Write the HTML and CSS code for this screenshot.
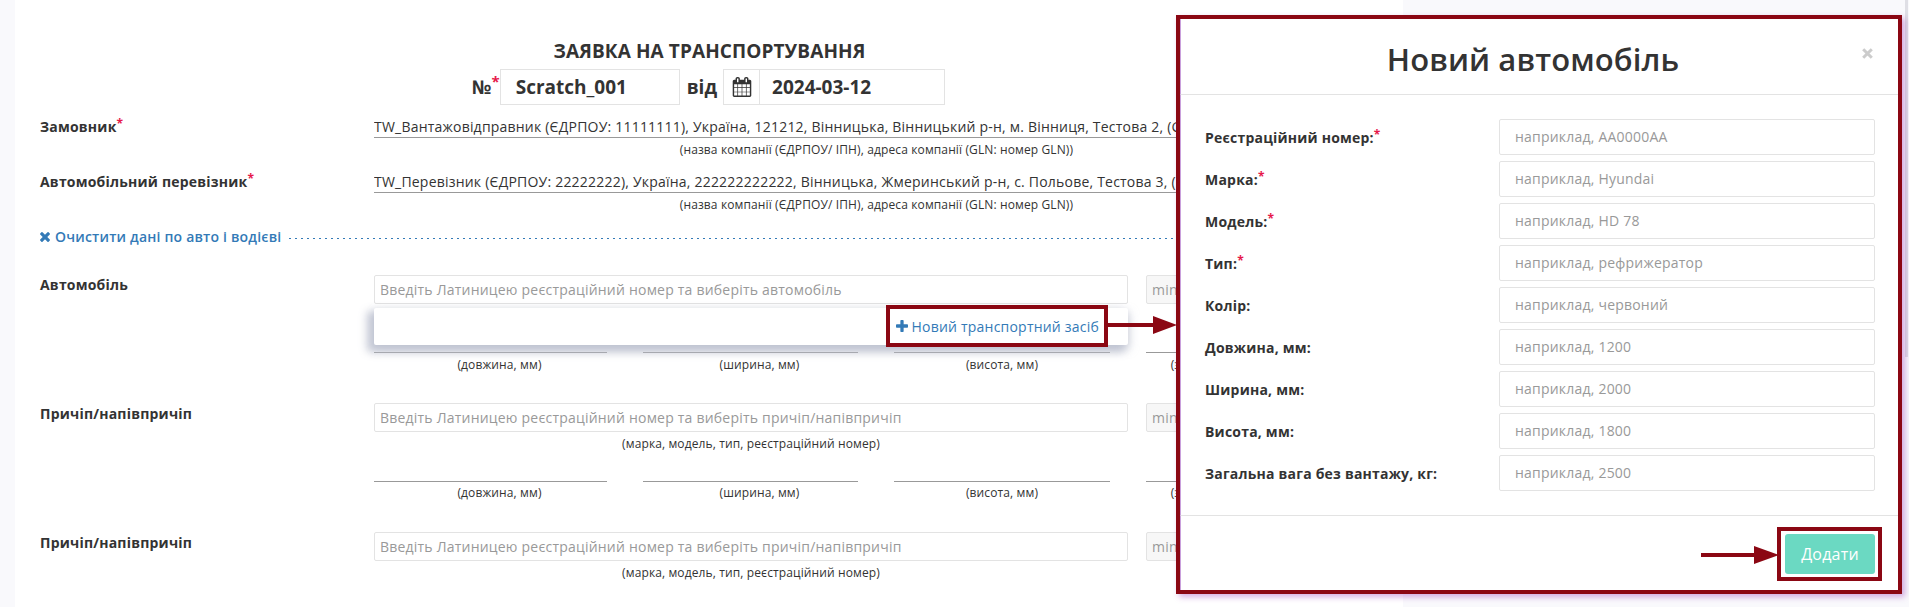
FILE: index.html
```
<!DOCTYPE html>
<html lang="uk">
<head>
<meta charset="utf-8">
<title>Заявка на транспортування</title>
<link rel="stylesheet" href="styles.css">
</head>
<body>
<main class="sheet">
  <h1 class="sheet-title">ЗАЯВКА НА ТРАНСПОРТУВАННЯ</h1>
  <div class="doc-line">
    <span class="doc-label">№<i class="req">*</i></span>
    <span class="doc-input doc-number">Scratch_001</span>
    <span class="doc-label doc-from">від</span>
    <span class="doc-date">
      <span class="doc-addon"><svg viewBox="0 0 1792 1792"><path d="M192 1664h288v-288h-288v288zm352 0h320v-288h-320v288zm-352-352h288v-320h-288v320zm352 0h320v-320h-320v320zm-352-384h288v-288h-288v288zm736 736h320v-288h-320v288zm-384-736h320v-288h-320v288zm768 736h288v-288h-288v288zm-384-352h320v-320h-320v320zm-352-864v-288q0-13-9.5-22.5t-22.5-9.5h-64q-13 0-22.5 9.5t-9.5 22.5v288q0 13 9.5 22.5t22.5 9.5h64q13 0 22.5-9.5t9.5-22.5zm736 864h288v-320h-288v320zm-384-384h320v-288h-320v288zm384 0h288v-288h-288v288zm32-480v-288q0-13-9.5-22.5t-22.5-9.5h-64q-13 0-22.5 9.5t-9.5 22.5v288q0 13 9.5 22.5t22.5 9.5h64q13 0 22.5-9.5t9.5-22.5zm384-64v1280q0 52-38 90t-90 38h-1408q-52 0-90-38t-38-90v-1280q0-52 38-90t90-38h128v-96q0-66 47-113t113-47h64q66 0 113 47t47 113v96h384v-96q0-66 47-113t113-47h64q66 0 113 47t47 113v96h128q52 0 90 38t38 90z"/></svg></span>
      <span class="doc-date-value">2024-03-12</span>
    </span>
  </div>

  <section class="row party">
    <div class="label">Замовник<i class="req">*</i></div>
    <div class="field">
      <div class="value">TW_Вантажовідправник (ЄДРПОУ: 11111111), Україна, 121212, Вінницька, Вінницький р-н, м. Вінниця, Тестова 2, (G</div>
      <div class="hint">(назва компанії (ЄДРПОУ/ ІПН), адреса компанії (GLN: номер GLN))</div>
    </div>
  </section>
  <section class="row party">
    <div class="label">Автомобільний перевізник<i class="req">*</i></div>
    <div class="field">
      <div class="value">TW_Перевізник (ЄДРПОУ: 22222222), Україна, 222222222222, Вінницька, Жмеринський р-н, с. Польове, Тестова 3, (G</div>
      <div class="hint">(назва компанії (ЄДРПОУ/ ІПН), адреса компанії (GLN: номер GLN))</div>
    </div>
  </section>

  <div class="clear-row">
    <a class="link clear"><svg class="ico-x" viewBox="302 302 1188 1188"><path d="M1490 1322q0 40-28 68l-136 136q-28 28-68 28t-68-28l-294-294-294 294q-28 28-68 28t-68-28l-136-136q-28-28-28-68t28-68l294-294-294-294q-28-28-28-68t28-68l136-136q28-28 68-28t68 28l294 294 294-294q28-28 68-28t68 28l136 136q28 28 28 68t-28 68l-294 294 294 294q28 28 28 68z" transform="translate(0 -64)"/></svg>Очистити дані по авто і водієві</a>
    <span class="dots"></span>
  </div>

  <section class="row vehicle">
    <div class="label">Автомобіль</div>
    <div class="field">
      <div class="inputs">
        <div class="input">Введіть Латиницею реєстраційний номер та виберіть автомобіль
          <div class="dropdown"><a class="link"><svg class="ico-plus" viewBox="192 192 1408 1408"><path d="M1600 736v192q0 40-28 68t-68 28h-416v416q0 40-28 68t-68 28h-192q-40 0-68-28t-28-68v-416h-416q-40 0-68-28t-28-68v-192q0-40 28-68t68-28h416v-416q0-40 28-68t68-28h192q40 0 68 28t28 68v416h416q40 0 68 28t28 68z" transform="translate(0 64)"/></svg>Новий транспортний засіб</a></div>
        </div>
        <div class="input disabled">min</div>
      </div>
      <div class="dims first">
        <div class="hint">(довжина, мм)</div><div class="hint">(ширина, мм)</div><div class="hint">(висота, мм)</div><div class="hint">(загальна вага без вантажу, кг)</div>
      </div>
    </div>
  </section>
  <section class="row vehicle trailer">
    <div class="label">Причіп/напівпричіп</div>
    <div class="field">
      <div class="inputs">
        <div class="input">Введіть Латиницею реєстраційний номер та виберіть причіп/напівпричіп</div>
        <div class="input disabled">min</div>
      </div>
      <div class="hint input-hint">(марка, модель, тип, реєстраційний номер)</div>
      <div class="dims">
        <div class="hint">(довжина, мм)</div><div class="hint">(ширина, мм)</div><div class="hint">(висота, мм)</div><div class="hint">(загальна вага без вантажу, кг)</div>
      </div>
    </div>
  </section>
  <section class="row vehicle trailer">
    <div class="label">Причіп/напівпричіп</div>
    <div class="field">
      <div class="inputs">
        <div class="input">Введіть Латиницею реєстраційний номер та виберіть причіп/напівпричіп</div>
        <div class="input disabled">min</div>
      </div>
      <div class="hint input-hint">(марка, модель, тип, реєстраційний номер)</div>
    </div>
  </section>
</main>

<div class="scrollbar"></div>

<div class="modal">
  <header class="modal-head">
    <h2>Новий автомобіль</h2>
    <svg class="close" viewBox="0 0 11 11"><path d="M1.2 1.2l8.6 8.6M9.8 1.2l-8.6 8.6"/></svg>
  </header>
  <div class="modal-body">
    <div class="m-row"><div class="m-label">Реєстраційний номер:<i class="req">*</i></div><div class="m-input">наприклад, AA0000AA</div></div>
    <div class="m-row"><div class="m-label">Марка:<i class="req">*</i></div><div class="m-input">наприклад, Hyundai</div></div>
    <div class="m-row"><div class="m-label">Модель:<i class="req">*</i></div><div class="m-input">наприклад, HD 78</div></div>
    <div class="m-row"><div class="m-label">Тип:<i class="req">*</i></div><div class="m-input">наприклад, рефрижератор</div></div>
    <div class="m-row"><div class="m-label">Колір:</div><div class="m-input">наприклад, червоний</div></div>
    <div class="m-row"><div class="m-label">Довжина, мм:</div><div class="m-input">наприклад, 1200</div></div>
    <div class="m-row"><div class="m-label">Ширина, мм:</div><div class="m-input">наприклад, 2000</div></div>
    <div class="m-row"><div class="m-label">Висота, мм:</div><div class="m-input">наприклад, 1800</div></div>
    <div class="m-row"><div class="m-label">Загальна вага без вантажу, кг:</div><div class="m-input">наприклад, 2500</div></div>
  </div>
  <footer class="modal-foot"><span class="btn">Додати</span></footer>
</div>

<div class="mark mark-link"></div>
<div class="mark mark-btn"></div>
<svg class="arrow arrow-link" viewBox="0 0 70 18"><path d="M0 7h46V0l24 9-24 9v-7H0z"/></svg>
<svg class="arrow arrow-btn" viewBox="0 0 78 18"><path d="M0 7h53V0l25 9-25 9v-7H0z"/></svg>
</body>
</html>
```

FILE: styles.css
```
* { box-sizing: border-box; }
html, body { margin: 0; height: 607px; overflow: hidden; }
body {
  position: relative;
  background: #f9f9fc;
  color: #333;
  font: 14px/20px "Open Sans", "Noto Sans", sans-serif;
  letter-spacing: .21px;
}
.sheet {
  width: 1388px;
  height: 607px;
  margin-left: 15px;
  padding: 36px 24px 0 25px;
  background: #fff;
  overflow: hidden;
}
.sheet-title {
  margin: 0;
  height: 33px;
  font-size: 19px;
  line-height: 30px;
  font-weight: 700;
  letter-spacing: .1px;
  text-align: center;
}
.req {
  position: relative;
  top: -4px;
  color: #e6194b;
  font-size: 12px;
  font-style: normal;
  font-weight: 700;
  letter-spacing: 0;
  line-height: 0;
}
.doc-line {
  display: flex;
  justify-content: center;
  height: 36px;
  margin-bottom: 12px;
  padding-right: 2px;
  font-size: 19px;
  line-height: 36px;
  font-weight: 700;
  letter-spacing: 0;
}
.doc-label .req { font-size: 15px; top: -7px; }
.doc-input, .doc-date { border: 1px solid #e3e3e3; line-height: 34px; }
.doc-number { width: 180px; padding-left: 15px; }
.doc-from { padding: 0 6px 0 7px; }
.doc-date { display: flex; width: 222px; }
.doc-addon {
  display: flex;
  width: 36px;
  padding: 7px 0 0 8px;
  border-right: 1px solid #e3e3e3;
}
.doc-addon svg { width: 20px; height: 20px; fill: #333; }
.doc-date-value { padding-left: 12px; }

.row { display: grid; grid-template-columns: 334px 1005px; }
.party { height: 55px; }
.label { font-weight: 700; }
.value {
  height: 21px;
  border-bottom: 1px solid #999;
  white-space: nowrap;
  overflow: hidden;
}
.hint {
  font-size: 12px;
  line-height: 18px;
  letter-spacing: .12px;
  text-align: center;
  white-space: nowrap;
}
.party .hint { margin-top: 3px; }

.clear-row { display: flex; height: 48px; }
.link { color: #337ab7; white-space: nowrap; }
.link svg { fill: #337ab7; }
.clear { font-weight: 600; letter-spacing: .2px; }
.ico-x { width: 10px; height: 10px; margin-right: 5px; }
.ico-plus { width: 12px; height: 12px; margin-right: 4px; }
.dots {
  flex: 1;
  height: 1px;
  margin: 11px 0 0 8px;
  background: repeating-linear-gradient(90deg, #337ab7 0 2px, transparent 2px 6px);
}

.vehicle { height: 128px; }
.trailer { height: 129px; }
.trailer .label { padding-top: 1px; }
.inputs { display: grid; grid-template-columns: 754px 233px; column-gap: 18px; }
.input {
  position: relative;
  height: 29px;
  padding-left: 5px;
  border: 1px solid #e3e3e3;
  border-radius: 2px;
  background: #fff;
  color: #999;
  line-height: 27px;
}
.input.disabled { background: #f7f7f7; }
.input-hint { width: 754px; margin-top: 3px; }
.dims { display: grid; grid-template-columns: 233px 215px 216px 233px; column-gap: 36px; margin-top: 28px; }
.dims.first { margin-top: 48px; }
.dims .hint { border-top: 1px solid #999; padding-top: 3px; }
.trailer .dims .hint { padding-top: 2px; }
.dims .hint:first-child { padding-left: 18px; }
.dims .hint:nth-child(2) { padding-left: 18px; }
.dropdown {
  position: absolute;
  z-index: 1;
  left: -1px;
  top: 32px;
  width: 754px;
  height: 37px;
  padding: 9px 29px 0 0;
  border-radius: 2px;
  background: #fff;
  box-shadow: -5px 5px 8px 2px rgba(186, 190, 206, .85), 2px 4px 8px rgba(186, 190, 206, .5);
  line-height: 20px;
  text-align: right;
}

.scrollbar {
  position: absolute;
  right: 1px;
  top: 0;
  width: 3px;
  height: 357px;
  background: #dfdfe5;
}
.modal {
  position: absolute;
  z-index: 2;
  left: 1176px;
  top: 15px;
  width: 726px;
  height: 579px;
  border: 4px solid #8b0713;
  background: #fff;
  box-shadow: 3px 3px 6px rgba(150, 50, 180, .4);
}
.modal-head {
  position: relative;
  height: 76px;
  border-bottom: 1px solid #e3e3e3;
  border-left: 1px solid #c9a0dc;
}
.modal-head h2 {
  margin: 0;
  padding: 19px 13px 0 0;
  font-size: 31px;
  line-height: 42px;
  font-weight: 600;
  letter-spacing: .1px;
  text-align: center;
}
.close {
  position: absolute;
  right: 25px;
  top: 29px;
  width: 11px;
  height: 11px;
  stroke: #ccc;
  stroke-width: 3;
}
.modal-body {
  display: flex;
  flex-direction: column;
  gap: 6px;
  height: 420px;
  padding: 24px 23px 0 24px;
  border-left: 1px solid #c9a0dc;
}
.m-row { display: grid; grid-template-columns: 294px 376px; height: 36px; }
.m-label { padding-top: 9px; font-weight: 700; }
.m-input {
  padding-left: 15px;
  border: 1px solid #e3e3e3;
  border-radius: 2px;
  color: #999;
  line-height: 34px;
}
.modal-foot {
  display: flex;
  justify-content: flex-end;
  height: 75px;
  padding: 18px 23px 0 0;
  border-top: 1px solid #e3e3e3;
  border-left: 1px solid #c9a0dc;
}
.btn {
  width: 90px;
  height: 40px;
  border-radius: 3px;
  background: #6bd9c2;
  color: #fff;
  font-size: 16px;
  line-height: 40px;
  text-align: center;
}
.mark { position: absolute; z-index: 3; border: 4px solid #8b0713; }
.mark-link { left: 886px; top: 305px; width: 222px; height: 42px; }
.mark-btn { left: 1777px; top: 527px; width: 105px; height: 54px; }
.arrow { position: absolute; z-index: 3; height: 18px; fill: #8b0713; }
.arrow-link { left: 1107px; top: 316px; width: 70px; }
.arrow-btn { left: 1701px; top: 546px; width: 78px; }
```
